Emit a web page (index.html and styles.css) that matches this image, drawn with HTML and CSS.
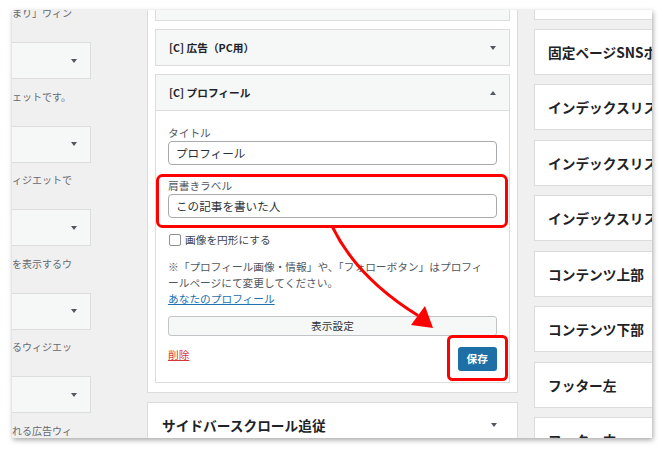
FILE: index.html
```html
<!DOCTYPE html>
<html lang="ja">
<head>
<meta charset="utf-8">
<title>ウィジェット</title>
<link rel="stylesheet" href="styles.css">
</head>
<body>
<div class="frame">
  <div class="col-left">
    <p class="desc first">まり」ウィン</p>
    <div class="avail"><span class="tri down"></span></div>
    <p class="desc">ェットです。</p>
    <div class="avail"><span class="tri down"></span></div>
    <p class="desc">ィジエットで</p>
    <div class="avail"><span class="tri down"></span></div>
    <p class="desc">を表示するウ</p>
    <div class="avail"><span class="tri down"></span></div>
    <p class="desc">るウィジエッ</p>
    <div class="avail"><span class="tri down"></span></div>
    <p class="desc">れる広告ウィ</p>
  </div>

  <div class="col-mid">
    <div class="holder open">
      <div class="widget">
        <div class="wtop"></div>
      </div>
      <div class="widget">
        <div class="wtop"><span class="wtitle">[C] 広告（PC用）</span><span class="tri down"></span></div>
      </div>
      <div class="widget">
        <div class="wtop"><span class="wtitle">[C] プロフィール</span><span class="tri up"></span></div>
        <div class="winside">
          <div class="field">
            <label class="flabel">タイトル</label>
            <input class="input" type="text" value="プロフィール">
          </div>
          <div class="field">
            <label class="flabel">肩書きラベル</label>
            <input class="input" type="text" value="この記事を書いた人">
          </div>
          <div class="check"><span class="cbox"></span><span>画像を円形にする</span></div>
          <div class="note">
            <span class="line">※「プロフィール画像・情報」や、「フォローボタン」はプロフィ</span>
            <span class="line">ールページにて変更してください。</span>
            <a class="line link" href="#">あなたのプロフィール</a>
          </div>
          <div class="btn-display">表示設定</div>
          <div class="actions">
            <a class="del" href="#">削除</a>
            <span class="save">保存</span>
          </div>
        </div>
      </div>
    </div>
    <div class="holder closed mid">
      <h2 class="sname">サイドバースクロール追従</h2><span class="tri down"></span>
    </div>
  </div>

  <div class="col-right">
    <div class="holder closed side"></div>
    <div class="holder closed side"><h2 class="sname">固定ページSNSボタン上</h2></div>
    <div class="holder closed side"><h2 class="sname">インデックスリスト上部</h2></div>
    <div class="holder closed side"><h2 class="sname">インデックスリスト中間</h2></div>
    <div class="holder closed side"><h2 class="sname">インデックスリスト下部</h2></div>
    <div class="holder closed side"><h2 class="sname">コンテンツ上部</h2></div>
    <div class="holder closed side"><h2 class="sname">コンテンツ下部</h2></div>
    <div class="holder closed side"><h2 class="sname">フッター左</h2></div>
    <div class="holder closed side"><h2 class="sname">フッター中</h2></div>
  </div>

  <svg class="annot" width="640" height="428" viewBox="0 0 640 428" xmlns="http://www.w3.org/2000/svg">
    <rect x="145.5" y="165.5" width="349" height="51" rx="5" fill="none" stroke="#ff0000" stroke-width="3"/>
    <rect x="436.5" y="326.5" width="58" height="43" rx="4" fill="none" stroke="#ff0000" stroke-width="3"/>
    <path d="M320 216 Q345 268 406 305.5" fill="none" stroke="#ff0000" stroke-width="3"/>
    <polygon points="413,296 399,315 421,318" fill="#ff0000"/>
  </svg>
</div>
</body>
</html>
```

FILE: styles.css
```css
html, body {
  margin: 0;
  padding: 0;
}
body {
  background: #ffffff;
  width: 664px;
  height: 451px;
  overflow: hidden;
}
.frame {
  position: relative;
  margin: 10px 0 0 12px;
  width: 640px;
  height: 428px;
  overflow: hidden;
  background: #f0f0f1;
  display: flex;
  align-items: flex-start;
  box-shadow: 1px 2px 5px rgba(0, 0, 0, 0.35);
  font-family: "Noto Sans CJK JP", "Noto Sans", sans-serif;
  color: #1d2327;
}

/* left: available widgets (clipped) */
.col-left {
  width: 135px;
  flex: none;
}
.desc {
  margin: 9.5px 0 21px;
  font-size: 10px;
  line-height: 16px;
  color: #646970;
  white-space: nowrap;
}
.desc.first {
  margin-top: -5px;
}
.avail {
  width: 100px;
  height: 37px;
  box-sizing: border-box;
  margin-left: -21px;
  border: 1px solid #dcdcde;
  background: #f6f7f7;
  display: flex;
  align-items: center;
  justify-content: flex-end;
  padding-right: 13px;
}

.tri {
  display: block;
  width: 0;
  height: 0;
  border-left: 3px solid transparent;
  border-right: 3px solid transparent;
}
.tri.down {
  border-top: 4px solid #50575e;
}
.tri.up {
  border-bottom: 4px solid #50575e;
}

/* middle: open sidebar */
.col-mid {
  width: 371px;
  flex: none;
  margin-top: -37px;
  margin-right: 16px;
}
.holder {
  background: #ffffff;
  border: 1px solid #dcdcde;
  box-sizing: border-box;
}
.holder.open {
  padding: 10px 7px 9px;
}
.widget {
  border: 1px solid #dcdcde;
  background: #ffffff;
}
.widget + .widget {
  margin-top: 8px;
}
.wtop {
  height: 35px;
  background: #f6f7f7;
  display: flex;
  align-items: center;
  justify-content: space-between;
  padding: 0 13px 0 13px;
}
.wtitle {
  font-size: 10.7px;
  font-weight: 700;
  color: #1d2327;
  white-space: nowrap;
}
.winside {
  border-top: 1px solid #dcdcde;
  padding: 14px 12px 11px;
}
.field + .field {
  margin-top: 13px;
}
.flabel {
  display: block;
  font-size: 10.7px;
  line-height: 16px;
  color: #50575e;
}
.input {
  display: block;
  width: 100%;
  box-sizing: border-box;
  height: 24px;
  margin: 0;
  border: 1px solid #a7aaad;
  border-radius: 4px;
  padding: 0 7px;
  background: #ffffff;
  font-family: "Noto Sans CJK JP", "Noto Sans", sans-serif;
  font-size: 11.6px;
  color: #2c3338;
  outline: none;
}
.check {
  margin-top: 15px;
  height: 13px;
  display: flex;
  align-items: center;
  gap: 4px;
  font-size: 10.7px;
  color: #3c434a;
}
.cbox {
  width: 12px;
  height: 12px;
  box-sizing: border-box;
  border: 1px solid #8c8f94;
  border-radius: 2px;
  background: #ffffff;
  margin-left: 1px;
}
.note {
  margin-top: 13px;
  font-size: 10.7px;
  line-height: 16px;
  color: #50575e;
}
.note .line {
  display: block;
  white-space: nowrap;
}
.note .link {
  display: inline-block;
  color: #2271b1;
  text-decoration: underline;
}
.btn-display {
  margin-top: 9px;
  height: 20px;
  box-sizing: border-box;
  border: 1px solid #c3c4c7;
  border-radius: 3px;
  background: #f6f7f7;
  font-size: 10.7px;
  line-height: 18px;
  text-align: center;
  color: #2c3338;
}
.actions {
  margin-top: 11px;
  height: 24px;
  display: flex;
  justify-content: space-between;
  align-items: flex-start;
}
.del {
  font-size: 10.7px;
  line-height: 16px;
  color: #d63638;
  text-decoration: underline;
}
.save {
  height: 24px;
  padding: 0 9px;
  border-radius: 3px;
  background: #1d6fa5;
  color: #ffffff;
  font-size: 10.7px;
  font-weight: 700;
  line-height: 24px;
}

/* closed sidebars */
.holder.closed {
  height: 46px;
  display: flex;
  align-items: center;
  justify-content: space-between;
}
.holder.mid {
  margin-top: 9px;
  padding: 0 20px 0 14px;
}
.sname {
  margin: 0;
  font-size: 13.7px;
  font-weight: 700;
  color: #1d2327;
  white-space: nowrap;
}
.col-right {
  width: 200px;
  flex: none;
  margin-top: -36.4px;
}
.holder.side {
  padding-left: 13px;
  margin-bottom: 9.43px;
}

/* annotation overlay */
.annot {
  position: absolute;
  left: 0;
  top: 0;
  pointer-events: none;
}
```
